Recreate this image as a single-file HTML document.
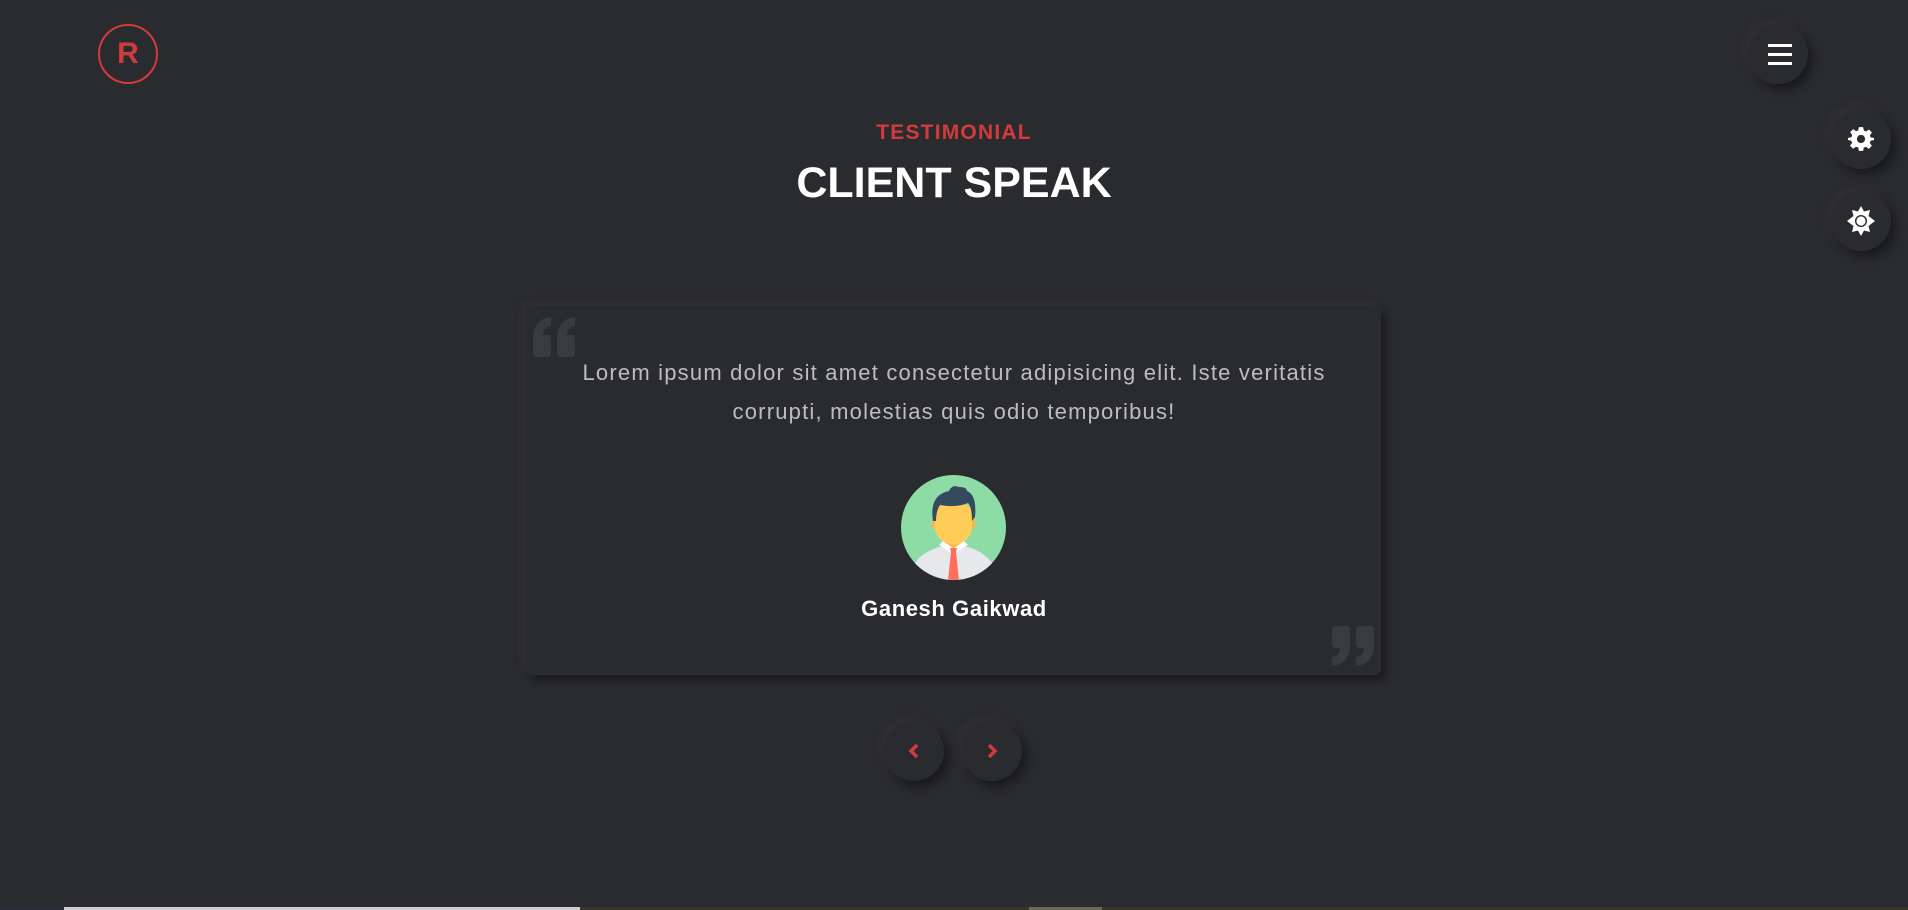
<!DOCTYPE html>
<html><head><meta charset="utf-8"><style>
*{margin:0;padding:0;box-sizing:border-box}
body{width:1908px;height:910px;background:#2a2b2f;font-family:"Liberation Sans",sans-serif;position:relative;overflow:hidden}
.abs{position:absolute}
.btn{position:absolute;width:60px;height:60px;border-radius:50%;background:#2a2b2f;box-shadow:5px 6px 10px rgba(0,0,0,.4),-4px -4px 9px rgba(70,66,60,.28)}
.c{text-align:center;width:100%;left:0}
</style></head><body>
<div class="abs" style="left:98px;top:24px;width:60px;height:60px;border:2.5px solid #d13b3b;border-radius:50%;color:#d13b3b;font-size:30px;line-height:55px;text-align:center;font-weight:bold">R</div>
<div class="btn" style="left:1748px;top:24px"><div class="abs" style="left:20px;top:20px;width:24px;height:3px;background:#fff;box-shadow:0 9px 0 #fff,0 18px 0 #fff"></div></div>
<div class="btn" style="left:1831px;top:109px"><svg class="abs" style="left:17px;top:17px" width="26" height="26" viewBox="0 0 24 24"><path fill="#fff" fill-rule="evenodd" d="M10 1h4l.6 3.2 2 .9 2.7-1.9 2.8 2.8-1.9 2.7.9 2L24 11v2l-3 .5-.9 2.1 1.9 2.7-2.8 2.8-2.7-1.9-2 .9L14 23h-4l-.5-3-2.1-.9-2.7 1.9-2.8-2.8 1.9-2.7-.9-2L0 13v-2l3-.5.9-2.1-1.9-2.7 2.8-2.8 2.7 1.9 2-.9zM12 8.2a3.8 3.8 0 1 0 0 7.6 3.8 3.8 0 1 0 0-7.6z"/></svg></div>
<div class="btn" style="left:1831px;top:191px"><svg class="abs" style="left:16px;top:15px" width="28" height="30" viewBox="0 0 28 30"><path fill="#fff" d="M14 0l3 5.5 6-1.5-1.5 6L28 15l-6.5 5 1.5 6-6-1.5-3 5.5-3-5.5-6 1.5 1.5-6L0 15l6.5-5L5 4l6 1.5z"/><circle cx="14" cy="15" r="6" fill="#2a2b2f"/><circle cx="14" cy="15" r="4.6" fill="#fff"/></svg></div>
<div class="abs c" style="top:121px;font-size:21px;color:#d13b3b;font-weight:bold;letter-spacing:1.2px">TESTIMONIAL</div>
<div class="abs c" style="top:159px;font-size:43px;color:#fff;font-weight:bold">CLIENT SPEAK</div>
<div class="abs" style="left:526px;top:306px;width:855px;height:369px;border-radius:6px;background:#2a2b2f;box-shadow:5px 6px 8px rgba(0,0,0,.35),-4px -4px 8px rgba(70,66,60,.28)"></div>
<svg class="abs" style="left:533px;top:317px" width="46" height="40" viewBox="0 0 46 40"><g fill="#3a3b3f"><path d="M0 22q0-20 18-22v9q-8 1-8 9h4q4 0 4 4v14q0 4-4 4H4q-4 0-4-4z"/><path d="M24 22q0-20 18-22v9q-8 1-8 9h4q4 0 4 4v14q0 4-4 4h-10q-4 0-4-4z"/></g></svg>
<svg class="abs" style="left:1328px;top:626px;transform:rotate(180deg)" width="46" height="40" viewBox="0 0 46 40"><g fill="#3a3b3f"><path d="M0 22q0-20 18-22v9q-8 1-8 9h4q4 0 4 4v14q0 4-4 4H4q-4 0-4-4z"/><path d="M24 22q0-20 18-22v9q-8 1-8 9h4q4 0 4 4v14q0 4-4 4h-10q-4 0-4-4z"/></g></svg>
<div class="abs c" style="top:353px;font-size:22px;line-height:39px;color:#bdbdbd;letter-spacing:1.2px">Lorem ipsum dolor sit amet consectetur adipisicing elit. Iste veritatis<br>corrupti, molestias quis odio temporibus!</div>
<svg class="abs" style="left:901px;top:475px" width="105" height="105" viewBox="0 0 105 105"><defs><clipPath id="cp"><circle cx="52.5" cy="52.5" r="52.5"/></clipPath></defs><g clip-path="url(#cp)"><rect width="105" height="105" fill="#8ddca6"/><path d="M8 105q2-24 30-33h29q28 9 30 33z" fill="#e6e8ec"/><path d="M43 58h19v16h-19z" fill="#f6b84a"/><path d="M38 70l12 8 2-5-10-7zM67 70l-12 8-2-5 10-7z" fill="#fff"/><path d="M49 73h7l-1 4 3 28h-11l3-28z" fill="#ff6f5b"/><ellipse cx="34" cy="48" rx="3.5" ry="6" fill="#f6b84a"/><ellipse cx="71" cy="48" rx="3.5" ry="6" fill="#f6b84a"/><path d="M34 38q0-10 18.5-10T71 38v14q0 14-18.5 18Q34 66 34 52z" fill="#ffcd57"/><path d="M32 46q-4-26 16-30 3-7 10-4 8 0 8 4 10 4 8 26l-3 4q0-14-4-18-12 5-28 2-4 6-4 16z" fill="#344a5e"/></g></svg>
<div class="abs c" style="top:596px;font-size:22px;color:#fff;font-weight:bold;letter-spacing:.6px">Ganesh Gaikwad</div>
<div class="btn" style="left:884px;top:721px"><svg class="abs" style="left:23px;top:22px" width="14" height="16" viewBox="0 0 14 16"><path d="M10 2L4 8l6 6" stroke="#d13b3b" stroke-width="3.5" fill="none"/></svg></div>
<div class="btn" style="left:962px;top:721px"><svg class="abs" style="left:23px;top:22px" width="14" height="16" viewBox="0 0 14 16"><path d="M4 2l6 6-6 6" stroke="#d13b3b" stroke-width="3.5" fill="none"/></svg></div>
<div class="abs" style="left:0;top:907px;width:1908px;height:3px;background:#3a3428"></div>
<div class="abs" style="left:0;top:907px;width:64px;height:3px;background:#2a2e38"></div>
<div class="abs" style="left:64px;top:907px;width:516px;height:3px;background:#cfcfcf"></div>
<div class="abs" style="left:1029px;top:907px;width:73px;height:3px;background:#6b6858"></div>
</body></html>
